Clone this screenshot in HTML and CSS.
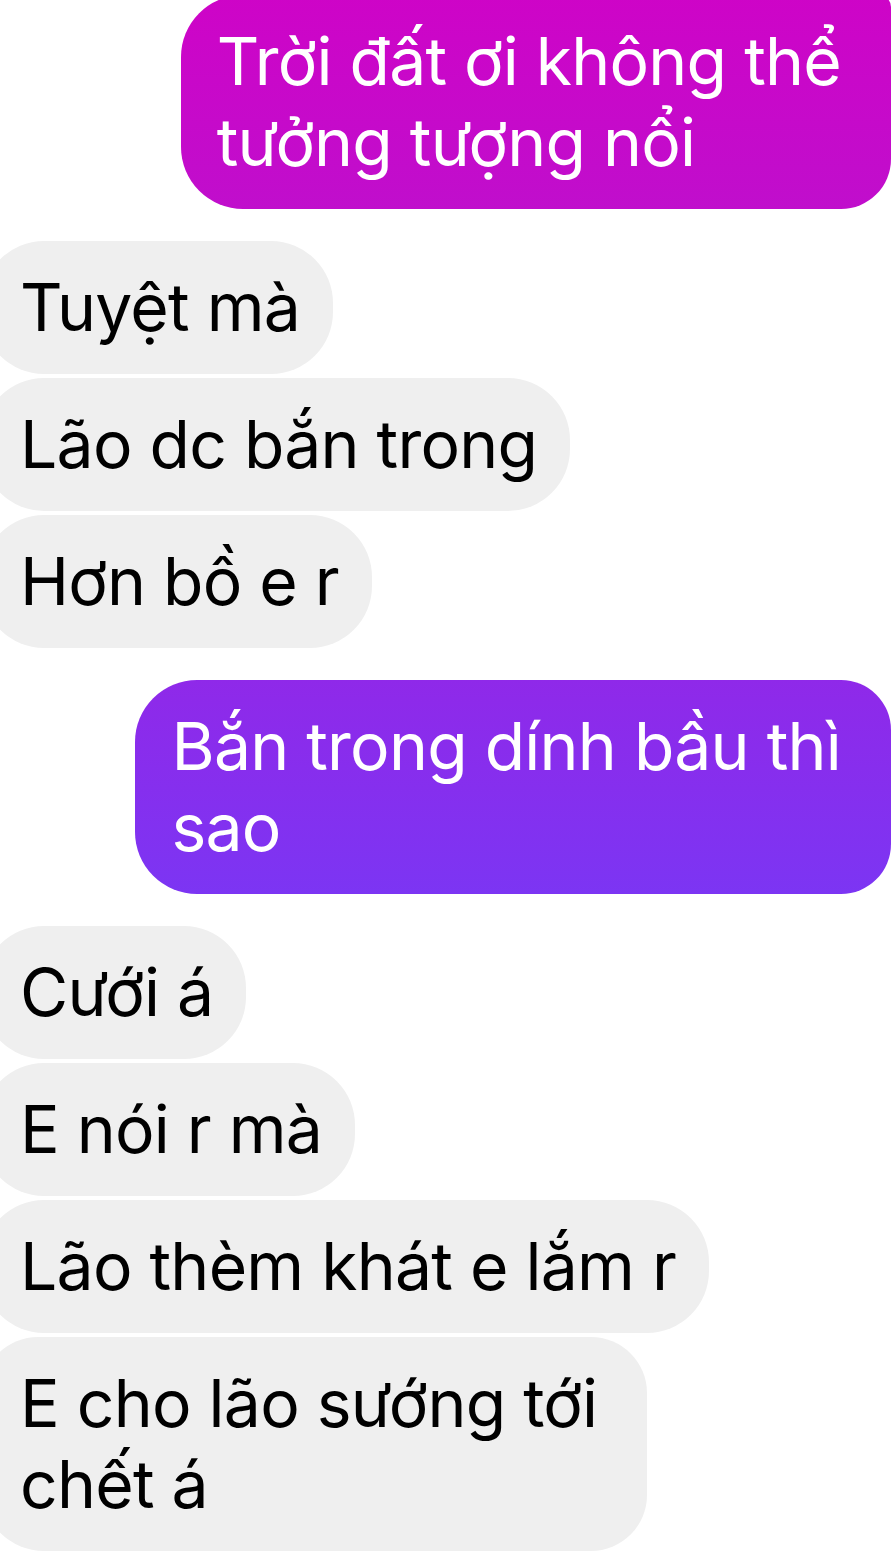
FILE: index.html
```html
<!DOCTYPE html>
<html lang="vi">
<head>
<meta charset="utf-8">
<title>Chat</title>
<link rel="stylesheet" href="styles.css">
</head>
<body>
<main class="thread">
  <div class="row row-sent row-first">
    <div class="bubble sent sent-pink">Trời đất ơi không thể<br>tưởng tượng nổi</div>
  </div>
  <div class="group">
    <div class="row"><div class="bubble recv">Tuyệt mà</div></div>
    <div class="row"><div class="bubble recv">Lão dc bắn trong</div></div>
    <div class="row"><div class="bubble recv">Hơn bồ e r</div></div>
  </div>
  <div class="row row-sent">
    <div class="bubble sent sent-violet">Bắn trong dính bầu thì<br>sao</div>
  </div>
  <div class="group">
    <div class="row"><div class="bubble recv">Cưới á</div></div>
    <div class="row"><div class="bubble recv">E nói r mà</div></div>
    <div class="row"><div class="bubble recv">Lão thèm khát e lắm r</div></div>
    <div class="row"><div class="bubble recv recv-wrap">E cho lão sướng tới<br>chết á</div></div>
  </div>
</main>
</body>
</html>
```

FILE: styles.css
```css
html, body {
  margin: 0;
  padding: 0;
  background: #ffffff;
}

body {
  width: 892px;
  height: 1554px;
  overflow: hidden;
  font-family: "Inter", "Noto Sans", sans-serif;
}

.thread {
  display: flex;
  flex-direction: column;
  gap: 32px;
  margin-top: -5px;
}

.group {
  display: flex;
  flex-direction: column;
  gap: 4px;
}

.row {
  display: flex;
  justify-content: flex-start;
}

.row-sent {
  justify-content: flex-end;
}

.bubble {
  font-size: 66px;
  line-height: 81px;
  letter-spacing: -0.75px;
  white-space: nowrap;
  box-sizing: border-box;
}

.recv {
  background: #efefef;
  color: #000000;
  margin-left: -18px;
  padding: 26px 33px 26px 38px;
  border-radius: 62px;
}

.recv-wrap {
  padding-right: 50px;
  border-radius: 56px 56px 56px 62px;
}

.sent {
  color: #ffffff;
  margin-right: 1px;
  padding: 26px 50px 26px 36px;
  border-radius: 62px 50px 50px 62px;
}

.row-first .sent {
  border-top-right-radius: 12px;
}

.sent-pink {
  background: linear-gradient(180deg, #ce04c7 0%, #c00ecc 100%);
}

.sent-violet {
  background: linear-gradient(180deg, #8f29e9 0%, #7c35f3 100%);
}
```
